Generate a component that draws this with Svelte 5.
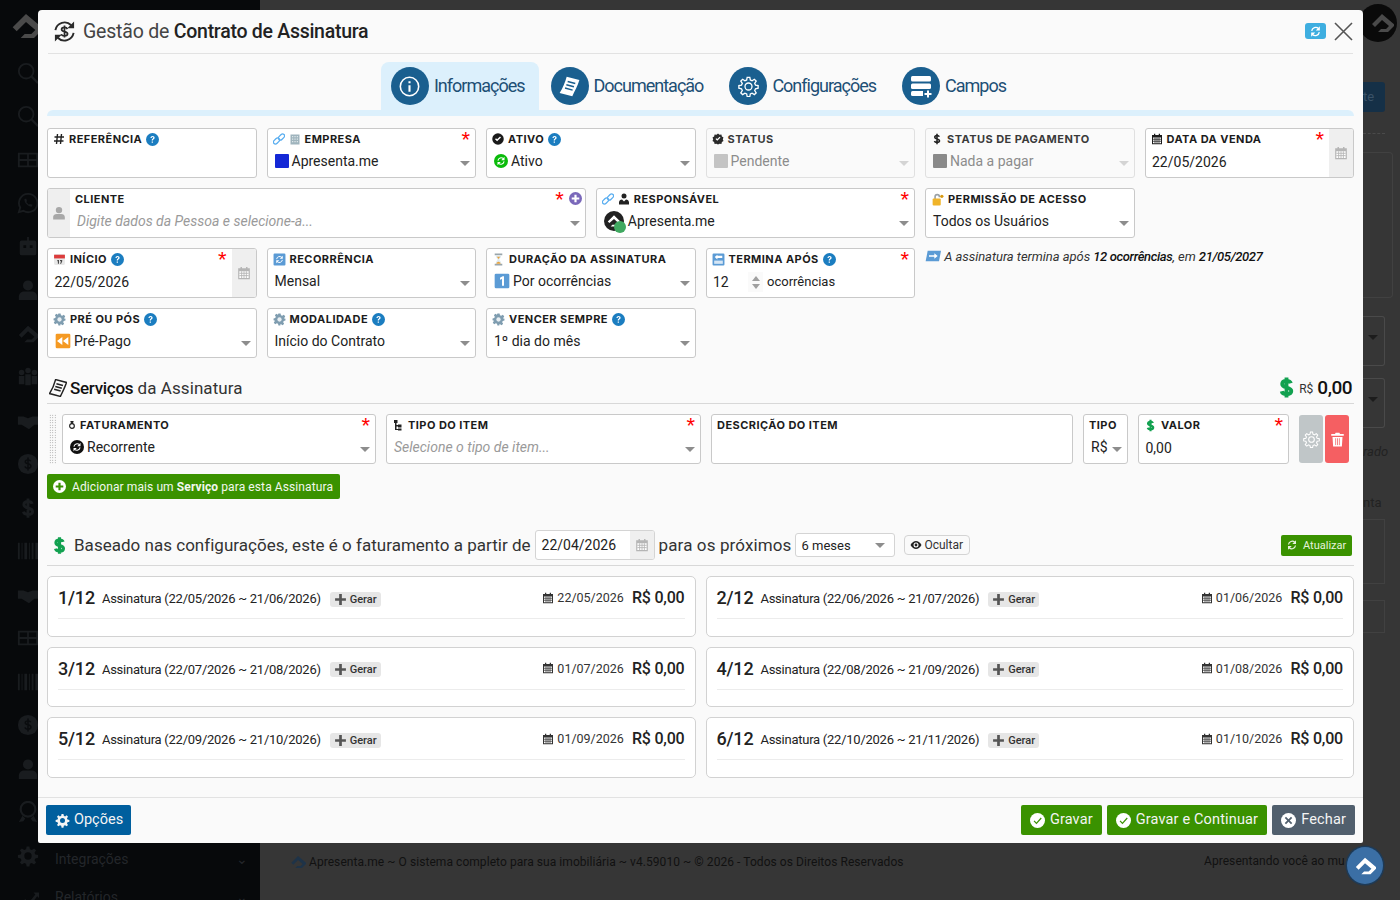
<script>
	// inner markup of the little icons, 24x24 box
	const arrows = (c) =>
		`<path d="M5 11a7.500 7.500 0 0 1 12.500-4.500M19 13a7.500 7.500 0 0 1-12.500 4.500" fill="none" stroke="${c}" stroke-width="2.400"/><path d="M20 2.500V10h-7.500zM4 21.500V14h7.500z" fill="${c}"/>`;

	const icons = {
		help: '<circle cx="12" cy="12" r="12" fill="#1b7dc0"/><path d="M8.300 9.200c.2-2.300 1.800-3.600 3.900-3.600s3.700 1.300 3.700 3.200c0 2.900-3.200 2.700-3.200 5.200h-2.200c0-3.700 3-3.400 3-5.100 0-.8-.7-1.400-1.400-1.400-.9 0-1.500.6-1.600 1.700zM10.500 15.700h2.300V18h-2.300z" fill="#fff"/>',
		hash: '<path d="M9 2 7 22M17 2l-2 20M3 8h19M2 16h19" stroke="#222" stroke-width="2.800" fill="none"/>',
		link: '<g fill="none" stroke="#5aaef0" stroke-width="2.600"><rect x="0" y="12" width="14" height="8" rx="4" transform="rotate(-45 7 16)"/><rect x="10" y="4" width="14" height="8" rx="4" transform="rotate(-45 17 8)"/></g>',
		office: '<path d="M3 3h18v20H3z" fill="#9fb4bd"/><path d="M6 6h2.500v2.500H6zM10.800 6h2.500v2.500h-2.500zM15.500 6H18v2.500h-2.500zM6 11h2.500v2.500H6zM10.800 11h2.500v2.500h-2.500zM15.500 11H18v2.500h-2.500zM6 16h2.500v2.500H6zM10.800 16h2.500v2.500h-2.500zM15.500 16H18v2.500h-2.500z" fill="#dfe7ea"/>',
		check: '<circle cx="12" cy="12" r="11.500" fill="#1a1a1a"/><path d="m6 12.500 4.200 4.200L18 9l-2-2-5.800 5.700L8 10.500z" fill="#fff"/>',
		badge: '<path d="m12 1 3 2.400 3.800-.3 1 3.700 3.200 2.100-1.400 3.600 1.400 3.500-3.200 2.100-1 3.700-3.800-.3L12 23l-3-1.500-3.800.3-1-3.700L1 16l1.400-3.500L1 8.900l3.200-2.100 1-3.700 3.800.3z" fill="#2a2a2a"/><path d="m7 12 3.500 3.500L17 9l-1.700-1.700-4.800 4.800-1.800-1.800z" fill="#fff"/>',
		dollar: '<path d="M16.500 7.500C16 5.700 14.200 5 12 5c-2.500 0-4.500 1.200-4.500 3.400 0 4.800 9.500 2.400 9.500 7.300 0 2.200-2.200 3.300-5 3.300-2.500 0-4.500-1-5-3M12 1.500v21" stroke="#222" stroke-width="3.200" fill="none"/>',
		cal: '<path d="M6 1.500h2.500V4h7V1.500H18V4h4v18.500H2V4h4z" fill="currentColor"/><path d="M4 9h16v11.500H4z" fill="#fff"/><path d="M4 12.500h16M4 16.500h16M8 9v12M12 9v12M16 9v12" stroke="currentColor" stroke-width="1.500"/>',
		person: '<circle cx="12" cy="7" r="5.500" fill="currentColor"/><path d="M2 23v-4c0-3.500 3-5.500 6-5.500h8c3 0 6 2 6 5.500v4z" fill="currentColor"/>',
		boss: '<circle cx="12" cy="6" r="5" fill="#222"/><path d="M2 23v-4c0-4 3-6 6-6l4 4 4-4c3 0 6 2 6 6v4z" fill="#222"/>',
		plus: '<circle cx="12" cy="12" r="12" fill="#7a68ba"/><path d="M10 5h4v5h5v4h-5v5h-4v-5H5v-4h5z" fill="#fff"/>',
		lock: '<path d="M6 11V7a5.500 5.500 0 0 1 11 0v1h-3V7a2.500 2.500 0 0 0-5 0v4z" fill="#9aa1a6"/><rect x="3" y="10" width="15" height="13" rx="2" fill="#f0b429"/><circle cx="20" cy="6" r="3" fill="#d99a12"/>',
		date: '<rect x="2" y="2" width="20" height="20" rx="2" fill="#e8e8e8"/><path d="M2 3h20v7H2z" fill="#dc3c3c"/><path d="M8 13h3v7H9v-5H8zM13 13h4v2l-2 5h-2l2-5h-2z" fill="#444"/>',
		sync: '<rect x="1" y="1" width="22" height="22" rx="2" fill="#5b9bd5"/><g transform="translate(3 3) scale(.75)">' + arrows('#fff') + '</g>',
		hourglass: '<path d="M5 1h14v3H5zM5 20h14v3H5z" fill="#9aa5ab"/><path d="M7 4h10c0 5-3 6-3.500 8 .5 2 3.500 3 3.500 8H7c0-5 3-6 3.500-8C10 10 7 9 7 4" fill="#dfeaf0"/><path d="M9 7h6l-3 4zM8 20c0-2 2-4 4-4s4 2 4 4z" fill="#e8a33d"/>',
		end: '<rect x="1" y="1" width="22" height="22" rx="2" fill="#5b9bd5"/><path d="M19 5v4H10v3L5 7.500 10 3v2z" fill="#fff"/><path d="M4 14h16v6H4z" fill="#fff" opacity=".75"/>',
		gear: '<path d="M10 1h4l.7 3.200 2.300 1 2.800-1.800 2.800 2.800-1.800 2.800 1 2.300L23 10v4l-3.200.7-1 2.300 1.800 2.800-2.800 2.800-2.800-1.800-2.300 1L14 23h-4l-.7-3.200-2.300-1-2.800 1.800-2.800-2.800 1.800-2.800-1-2.300L1 14v-4l3.200-.7 1-2.300-1.800-2.800 2.800-2.800L9 3.200z" fill="#7f9db0"/><circle cx="12" cy="12" r="4" fill="#e8eef2"/>',
		one: '<rect x="1" y="1" width="22" height="22" rx="2" fill="#5b9bd5"/><path d="M9 7l4-2h2v14h-3V9l-3 1z" fill="#fff"/>',
		rewind: '<rect x="1" y="1" width="22" height="22" rx="2" fill="#f59a23"/><path d="M11 6v12l-8-6zM20 6v12l-8-6z" fill="#fff"/>',
		arrow: '<path d="M4 4h20l-3 16H1z" fill="#5b9bd5"/><path d="M6 11h8V8l5 4-5 4v-3H6z" fill="#fff"/>',
		active: '<circle cx="12" cy="12" r="12" fill="#0abb0a"/><g transform="translate(3 3) scale(.75)">' + arrows('#fff') + '</g>',
		recur: '<circle cx="12" cy="12" r="12" fill="#111"/><g transform="translate(3 3) scale(.75)">' + arrows('#fff') + '</g>',
		logo: '<circle cx="12" cy="12" r="12" fill="#222"/><path d="M12 5 4.500 12.500l2 2L12 9.500l5 4.500-2.500 2.500H10l-2 2h7.500l5-5z" fill="#fff"/>',
		moneybag: '<path d="M9 1h6l-1.500 5h-3zM12 8c5 0 7 3 7 7s-3 7-7 7-7-3-7-7 2-7 7-7" fill="none" stroke="#222" stroke-width="3.600"/>',
		tree: '<path d="M4 2h7v6H9v4h3v-1h7v6h-7v-2H9v5h3v-1h7v4h-7v-1H6V8H4z" fill="#222"/>',
		trash: '<path d="M9 1h6l1 2h6v3H2V3h6zM4 8h16l-1 15H5z" fill="#fff"/><path d="M9 10v11M12 10v11M15 10v11" stroke="#f25f5f" stroke-width="1.200"/>',
		cog: '<path d="M10.500 1.500h3l.6 3 2 .9 2.600-1.700 2.100 2.100-1.700 2.600.9 2 3 .6v3l-3 .6-.9 2 1.700 2.600-2.100 2.100-2.600-1.700-2 .9-.6 3h-3l-.6-3-2-.9-2.600 1.700-2.100-2.100 1.700-2.600-.9-2-3-.6v-3l3-.6.9-2-1.700-2.600 2.100-2.100 2.600 1.700 2-.9zM12 8a4 4 0 1 0 0 8 4 4 0 0 0 0-8" fill="currentColor" fill-rule="evenodd"/>',
		cogline: '<path d="M10.500 1.500h3l.6 3 2 .9 2.600-1.700 2.100 2.100-1.700 2.600.9 2 3 .6v3l-3 .6-.9 2 1.700 2.600-2.100 2.100-2.600-1.700-2 .9-.6 3h-3l-.6-3-2-.9-2.600 1.700-2.100-2.100 1.700-2.600-.9-2-3-.6v-3l3-.6.9-2-1.700-2.600 2.100-2.100 2.600 1.700 2-.9z" fill="none" stroke="currentColor" stroke-width="1.500"/><circle cx="12" cy="12" r="4" fill="none" stroke="currentColor" stroke-width="1.500"/>',
		receipt: '<g transform="rotate(15 12 12)"><path d="M6 2h15c0 6-2 14-3 20H3C5 16 6 8 6 2z" fill="none" stroke="currentColor" stroke-width="2"/><path d="M8.500 7h9M8 11h9M7.500 15h9" stroke="currentColor" stroke-width="2"/></g>',
		doc: '<g transform="rotate(15 12 12)"><path d="M6 2h15c0 6-2 14-3 20H3C5 16 6 8 6 2z" fill="currentColor"/><path d="M8.500 7h9M8 11h9M7.500 15h9" stroke="#1a5f8f" stroke-width="1.600"/></g>',
		info: '<circle cx="12" cy="12" r="10.500" fill="none" stroke="currentColor" stroke-width="1.800"/><path d="M10.800 10.500h2.400V18h-2.400zM10.800 6h2.400v2.400h-2.400z" fill="currentColor"/>',
		rows: '<rect x="2" y="2" width="20" height="5.500" rx="1.500" fill="currentColor"/><rect x="2" y="9.500" width="20" height="5.500" rx="1.500" fill="currentColor"/><path d="M3.500 17h10.500v5H3.500A1.500 1.500 0 0 1 2 20.500v-2A1.500 1.500 0 0 1 3.500 17z" fill="currentColor"/><path d="M18 16.500h2v2.500h2.500v2H20v2.500h-2V21h-2.500v-2H18z" fill="currentColor"/>',
		spark: arrows('currentColor'),
		addc: '<circle cx="12" cy="12" r="12" fill="#fff"/><path d="M10 5h4v5h5v4h-5v5h-4v-5H5v-4h5z" fill="#3a9200"/>',
		okc: '<circle cx="12" cy="12" r="12" fill="#fff"/><path d="m6.500 12.500 3.800 4L18 8" fill="none" stroke="#3a9200" stroke-width="2"/>',
		xc: '<circle cx="12" cy="12" r="12" fill="#fff"/><path d="m8 6 4 4 4-4 2 2-4 4 4 4-2 2-4-4-4 4-2-2 4-4-4-4z" fill="#515f6d"/>',
		eye: '<path d="M1 12c3-5 7-8 11-8s8 3 11 8c-3 5-7 8-11 8s-8-3-11-8z" fill="#222"/><circle cx="12" cy="12" r="5" fill="#fff"/><circle cx="12" cy="12" r="2.800" fill="#222"/>',
		cross: '<path d="M9.500 2h5v7.500H22v5h-7.500V22h-5v-7.500H2v-5h7.500z" fill="currentColor"/>',
		home: '<path d="M12 3 2 13l3 3 7-7 7 6-3 3h-5l-3 3h10l7-7z" fill="currentColor"/>',
		money: '<path d="M16.500 7.500C16 5.700 14.200 5 12 5c-2.500 0-4.500 1.200-4.500 3.400 0 4.800 9.500 2.400 9.500 7.300 0 2.200-2.200 3.300-5 3.300-2.500 0-4.500-1-5-3M12 1.500v21" stroke="#12a150" stroke-width="4" fill="none"/>',
		search: '<circle cx="10" cy="10" r="8" fill="none" stroke="currentColor" stroke-width="2"/><path d="m16 16 7 7" stroke="currentColor" stroke-width="2.500"/>',
		table: '<path d="M1 4h22v16H1zM3 6v5h8V6zM13 6v5h8V6zM3 13v5h8v-5zM13 13v5h8v-5z" fill="currentColor" fill-rule="evenodd"/>',
		chat: '<path d="M12 2a10 10 0 0 0-8.500 15L2 22l5-1.500A10 10 0 1 0 12 2z" fill="none" stroke="currentColor" stroke-width="2"/><path d="M8 8c0 4 4 8 8 8l1-2-3-1-1 1-3-3 1-1-1-3z" fill="currentColor"/>',
		bot: '<path d="M11 1h2v4h6a2 2 0 0 1 2 2v12a2 2 0 0 1-2 2H5a2 2 0 0 1-2-2V7a2 2 0 0 1 2-2h6zM7 10v3h3v-3zM14 10v3h3v-3z" fill="currentColor" fill-rule="evenodd"/>',
		team: '<circle cx="5" cy="7" r="3" fill="currentColor"/><circle cx="12" cy="5" r="3" fill="currentColor"/><circle cx="19" cy="7" r="3" fill="currentColor"/><path d="M2 11h6v9H2zM9 9h6v12H9zM16 11h6v9h-6z" fill="currentColor"/>',
		deal: '<path d="M1 7h6l5 2 5-2h6v9h-4l-6 5-3-2-5-3H1z" fill="currentColor"/>',
		coin: '<circle cx="12" cy="12" r="11" fill="currentColor"/><path d="M15 9c-.5-1-1.500-1.500-3-1.500-1.700 0-3 .7-3 2 0 3 6.200 1.500 6.200 4.700 0 1.500-1.500 2.300-3.200 2.300-1.500 0-3-.7-3.300-2M12 5v14" stroke="#0a0c0e" stroke-width="1.600" fill="none"/>',
		bucks: '<path d="M16.500 7.500C16 5.700 14.200 5 12 5c-2.500 0-4.500 1.200-4.500 3.400 0 4.800 9.500 2.400 9.500 7.300 0 2.200-2.200 3.300-5 3.300-2.500 0-4.500-1-5-3M12 1.500v21" stroke="currentColor" stroke-width="3.200" fill="none"/>',
		bars: '<path d="M1 3h2v18H1zM5 3h1v18H5zM8 3h3v18H8zM13 3h1v18h-1zM16 3h2v18h-2zM20 3h3v18h-3z" fill="currentColor"/>',
		medal: '<circle cx="12" cy="9" r="8" fill="none" stroke="currentColor" stroke-width="2.400"/><path d="M6 16 2 23l5-1 2-3zM18 16l4 7-5-1-2-3z" fill="currentColor"/>',
		chart: '<path d="M1 21 9 12l4 4 7-9-2-2h6v6l-2-2-9 12-4-4-6 6z" fill="currentColor"/>'
	};

	const sideIcons = ['search', 'search', 'table', 'chat', 'bot', 'person', 'home', 'team', 'deal', 'coin', 'bucks', 'bars', 'deal', 'table', 'bars', 'coin', 'person', 'medal', 'cog', 'chart'];

	// the label icons that are emoji in the original run a bit wider
	const leadSize = { date: 13, sync: 13, hourglass: 13, end: 13, gear: 13, lock: 13, moneybag: 8, tree: 12 };

	const grid = [
		{ span: 2, lead: ['hash'], label: 'Referência', help: true },
		{ span: 2, lead: ['link', 'office'], label: 'Empresa', req: true, swatch: '#1428d6', value: 'Apresenta.me', caret: true },
		{ span: 2, lead: ['check'], label: 'Ativo', help: true, valueIcon: 'active', value: 'Ativo', caret: true },
		{ span: 2, lead: ['badge'], label: 'Status', off: true, swatch: '#c4c4c4', value: 'Pendente', caret: true },
		{ span: 2, lead: ['dollar'], label: 'Status de Pagamento', off: true, swatch: '#8a8a8a', value: 'Nada a pagar', caret: true },
		{ span: 2, lead: ['cal'], label: 'Data da Venda', req: true, value: '22/05/2026', side: 'cal' },
		{ span: 5, label: 'Cliente', req: true, add: true, hint: 'Digite dados da Pessoa e selecione-a...', caret: true, before: 'person' },
		{ span: 3, lead: ['link', 'boss'], label: 'Responsável', req: true, avatar: true, value: 'Apresenta.me', caret: true },
		{ span: 2, lead: ['lock'], label: 'Permissão de Acesso', value: 'Todos os Usuários', caret: true },
		{ span: 2, empty: true },
		{ span: 2, lead: ['date'], label: 'Início', help: true, req: true, value: '22/05/2026', side: 'cal' },
		{ span: 2, lead: ['sync'], label: 'Recorrência', value: 'Mensal', caret: true },
		{ span: 2, lead: ['hourglass'], label: 'Duração da Assinatura', valueIcon: 'one', value: 'Por ocorrências', caret: true },
		{ span: 2, lead: ['end'], label: 'Termina após', help: true, req: true, spinner: true },
		{ span: 4, note: true },
		{ span: 2, lead: ['gear'], label: 'Pré ou Pós', help: true, valueIcon: 'rewind', value: 'Pré-Pago', caret: true },
		{ span: 2, lead: ['gear'], label: 'Modalidade', help: true, value: 'Início do Contrato', caret: true },
		{ span: 2, lead: ['gear'], label: 'Vencer Sempre', help: true, value: '1º dia do mês', caret: true }
	];

	const tabs = [
		{ name: 'Informações', icon: 'info', active: true },
		{ name: 'Documentação', icon: 'doc' },
		{ name: 'Configurações', icon: 'cogline' },
		{ name: 'Campos', icon: 'rows' }
	];

	const parcels = [
		{ n: '1/12', from: '22/05/2026', to: '21/06/2026', due: '22/05/2026' },
		{ n: '2/12', from: '22/06/2026', to: '21/07/2026', due: '01/06/2026' },
		{ n: '3/12', from: '22/07/2026', to: '21/08/2026', due: '01/07/2026' },
		{ n: '4/12', from: '22/08/2026', to: '21/09/2026', due: '01/08/2026' },
		{ n: '5/12', from: '22/09/2026', to: '21/10/2026', due: '01/09/2026' },
		{ n: '6/12', from: '22/10/2026', to: '21/11/2026', due: '01/10/2026' }
	];
</script>

{#snippet ic(name, size = 12, cls = '')}
	<svg class="ic {cls}" width={size} height={size} viewBox="0 0 24 24" aria-hidden="true">{@html icons[name]}</svg>
{/snippet}

{#snippet labelRow(label, lead = [], help = false)}
	<div class="label">
		{#each lead as l}
			{@render ic(l, leadSize[l] ?? 12)}
		{/each}
		<span>{label}</span>
		{#if help}{@render ic('help', 13)}{/if}
	</div>
{/snippet}

<div class="page">
	<aside class="sidebar">
		<div class="side-logo">{@render ic('home', 32)}</div>
		<div class="side-icons">
			{#each sideIcons as s}
				<span class="side-ic">{@render ic(s, 22)}</span>
			{/each}
		</div>
		<div class="side-foot">
			<span class="side-link">Integrações<i>⌄</i></span>
			<span class="side-link">Relatórios<i>⌄</i></span>
		</div>
	</aside>
	<main class="back">
		<div class="back-foot">
			<span class="back-left">{@render ic('home', 16)} Apresenta.me ~ O sistema completo para sua imobiliária ~ v4.59010 ~ © 2026 - Todos os Direitos Reservados</span>
			<span class="back-right">Apresentando você ao mu</span>
		</div>
	</main>

	<div class="strip">
		<span class="s-btn">te</span>
		<span class="s-dash"></span>
		<span class="s-panel"></span>
		<span class="s-sel"><i></i></span>
		<span class="s-sel"><i></i></span>
		<span class="s-text"><em>rado</em></span>
		<span class="s-text">nta</span>
		<span class="s-box"></span>
		<span class="s-box short"></span>
	</div>
	<div class="top-avatar">{@render ic('home', 24)}</div>
	<div class="float-btn">{@render ic('home', 22)}</div>

	<section class="modal">
		<header class="head">
			<svg class="ic" width="23" height="23" viewBox="0 0 24 24" aria-hidden="true">
				<path d="M2.500 10.500A9.700 9.700 0 0 1 19 5.500M21.500 13.500A9.700 9.700 0 0 1 5 18.500" fill="none" stroke="#2a2a2a" stroke-width="2"/>
				<path d="M22 1.500v7h-7zM2 22.500v-7h7z" fill="#2a2a2a"/>
				<path d="M15 9.500c-.4-1.200-1.500-1.700-3-1.700-1.700 0-3 .7-3 2 0 3 6.200 1.500 6.200 4.600 0 1.400-1.500 2.200-3.200 2.200s-3-.7-3.300-1.900M12 5.800v12.400" fill="none" stroke="#2a2a2a" stroke-width="1.800"/>
			</svg>
			<h1>Gestão de <b>Contrato de Assinatura</b></h1>
			<span class="spacer"></span>
			<span class="reload">{@render ic('spark', 13)}</span>
			<svg class="close" width="19" height="19" viewBox="0 0 19 19" aria-hidden="true"><path d="m1 1 17 17M18 1 1 18" stroke="#555" stroke-width="1.600"/></svg>
		</header>

		<nav class="tabs">
			{#each tabs as t}
				<div class="tab" class:active={t.active}>
					<span class="tab-ic">{@render ic(t.icon, t.icon === 'rows' ? 24 : 21)}</span>
					<span class="tab-name">{t.name}</span>
				</div>
			{/each}
		</nav>
		<div class="band"></div>

		<div class="form">
			{#each grid as f}
				{#if f.empty}
					<span style="grid-column: span {f.span}"></span>
				{:else if f.note}
					<p class="note" style="grid-column: span {f.span}">{@render ic('arrow', 16)} A assinatura termina após <b>12 ocorrências</b>, em <b>21/05/2027</b></p>
				{:else}
					<div class="field" class:off={f.off} style="grid-column: span {f.span}">
						{#if f.before}<span class="before">{@render ic(f.before, 14)}</span>{/if}
						<div class="field-main">
							{@render labelRow(f.label, f.lead ?? [], f.help)}
							<div class="value" class:lower={f.side || f.spinner}>
								{#if f.swatch}<span class="swatch" style="background: {f.swatch}"></span>{/if}
								{#if f.valueIcon}{@render ic(f.valueIcon, f.valueIcon === 'active' ? 14 : 16)}{/if}
								{#if f.avatar}
									<span class="avatar">{@render ic('logo', 20)}<i></i></span>
								{/if}
								{#if f.hint}<em class="hint">{f.hint}</em>{/if}
								{#if f.value}<span>{f.value}</span>{/if}
								{#if f.spinner}
									<span class="num">12</span>
									<span class="spin"><i class="up"></i><i class="down"></i></span>
									<span class="unit">ocorrências</span>
								{/if}
							</div>
							{#if f.req}<span class="req" class:shifted={f.add}>*</span>{/if}
							{#if f.add}<span class="add">{@render ic('plus', 13)}</span>{/if}
							{#if f.caret}<span class="caret"></span>{/if}
						</div>
						{#if f.side}<span class="side">{@render ic('cal', 14)}</span>{/if}
					</div>
				{/if}
			{/each}
		</div>

		<div class="section-head">
			{@render ic('receipt', 18)}
			<h2><b>Serviços</b> da Assinatura</h2>
			<span class="spacer"></span>
			{@render ic('money', 23, 'sum-ic')}
			<small>R$</small>
			<strong>0,00</strong>
		</div>

		<div class="service">
			<span class="grip"></span>
			<div class="field w-fat">
				<div class="field-main">
					{@render labelRow('Faturamento', ['moneybag'])}
					<div class="value">{@render ic('recur', 14)}<span>Recorrente</span></div>
					<span class="req">*</span><span class="caret"></span>
				</div>
			</div>
			<div class="field w-type">
				<div class="field-main">
					{@render labelRow('Tipo do Item', ['tree'])}
					<div class="value"><em class="hint">Selecione o tipo de item...</em></div>
					<span class="req">*</span><span class="caret"></span>
				</div>
			</div>
			<div class="field w-desc">
				<div class="field-main">{@render labelRow('Descrição do Item')}</div>
			</div>
			<div class="field w-kind">
				<div class="field-main">
					{@render labelRow('Tipo')}
					<div class="value"><span>R$</span></div>
					<span class="caret"></span>
				</div>
			</div>
			<div class="field w-val">
				<div class="field-main">
					<div class="label">{@render ic('money', 13)}<span>Valor</span></div>
					<div class="value lower"><span>0,00</span></div>
					<span class="req">*</span>
				</div>
			</div>
			<div class="row-btns">
				<span class="b-gear">{@render ic('cogline', 17)}</span>
				<span class="b-del">{@render ic('trash', 15)}</span>
			</div>
		</div>

		<div class="add-line">
			<button class="add-btn">{@render ic('addc', 13)}<span>Adicionar mais um <b>Serviço</b> para esta Assinatura</span></button>
		</div>

		<div class="bill-head">
			{@render ic('money', 19)}
			<span class="bill-text">Baseado nas configurações, este é o faturamento a partir de</span>
			<div class="date-input"><span>22/04/2026</span><i>{@render ic('cal', 14)}</i></div>
			<span class="bill-text wide">para os próximos</span>
			<div class="months"><span>6 meses</span><i></i></div>
			<button class="hide-btn">{@render ic('eye', 12)}<span>Ocultar</span></button>
			<span class="spacer"></span>
			<button class="refresh-btn">{@render ic('spark', 12)}<span>Atualizar</span></button>
		</div>

		<div class="cards">
			{#each parcels as p}
				<article class="card">
					<div class="card-row">
						<span class="c-n">{p.n}</span>
						<span class="c-desc">Assinatura ({p.from} ~ {p.to})</span>
						<span class="c-gen">{@render ic('cross', 13)}Gerar</span>
						<span class="spacer"></span>
						<span class="c-due">{@render ic('cal', 12)}{p.due}</span>
						<span class="c-val">R$ 0,00</span>
					</div>
				</article>
			{/each}
		</div>

		<footer class="foot">
			<button class="btn blue">{@render ic('cog', 15)}Opções</button>
			<span class="spacer"></span>
			<button class="btn green">{@render ic('okc', 15)}Gravar</button>
			<button class="btn green">{@render ic('okc', 15)}Gravar e Continuar</button>
			<button class="btn slate">{@render ic('xc', 15)}Fechar</button>
		</footer>
	</section>
</div>

<style>
	:global(body) {
		margin: 0;
		background: #363636;
		font-family: Roboto, 'Liberation Sans', sans-serif;
	}

	.page {
		position: relative;
		display: flex;
		width: 1400px;
		height: 900px;
		overflow: hidden;
	}

	.spacer { flex: 1; }
	.ic { flex: none; display: block; }

	/* what sits dimmed behind the modal */
	.sidebar {
		position: relative;
		width: 260px;
		flex: none;
		background: #07090b;
		color: #23262a;
		overflow: hidden;
	}
	.side-logo { height: 40px; padding: 10px 0 0 10px; color: #4a4a4a; }
	.side-icons {
		display: flex;
		flex-direction: column;
		padding-left: 17px;
		margin-top: 1px;
	}
	.side-ic {
		height: 43.500px;
		display: flex;
		align-items: center;
		color: #191c1f;
	}
	.side-foot {
		position: absolute;
		left: 55px;
		right: 12px;
		top: 851px;
		display: flex;
		flex-direction: column;
		gap: 20px;
		font-size: 14px;
	}
	.side-link { display: flex; justify-content: space-between; height: 18px; }
	.side-link i { font-style: normal; }

	.back {
		flex: 1;
		background: #363636;
		display: flex;
		flex-direction: column;
		justify-content: flex-end;
	}
	.back-foot {
		display: flex;
		justify-content: space-between;
		padding: 0 0 30px 30px;
		font-size: 12px;
		letter-spacing: 0.06px;
		color: #111;
	}
	.back-left { display: flex; align-items: center; gap: 3px; }
	.back-left :global(.ic) { color: #1e3348; }
	.back-right { width: 196px; white-space: nowrap; overflow: hidden; }

	.strip {
		position: absolute;
		left: 1363px;
		top: 0;
		width: 37px;
		height: 900px;
		display: flex;
		flex-direction: column;
		font-size: 13px;
		color: #222;
	}
	.strip span { box-sizing: border-box; flex: none; }
	.s-btn {
		width: 22px;
		height: 30px;
		margin-top: 82px;
		background: #153047;
		border-radius: 0 3px 3px 0;
		color: #3a5268;
		line-height: 30px;
	}
	.s-dash { width: 22px; height: 1px; margin-top: 21px; border-top: 1px dashed #4a4a4a; }
	.s-panel { width: 30px; height: 146px; margin-top: 18px; border: 1px solid #414141; border-left: 0; border-radius: 0 4px 4px 0; }
	.s-sel { position: relative; width: 22px; height: 50px; margin-top: 18px; border: 1px solid #4a4a4a; border-left: 0; border-radius: 0 3px 3px 0; }
	.s-sel + .s-sel { margin-top: 12px; }
	.s-sel i {
		position: absolute;
		right: 6px;
		top: 18px;
		border-left: 5px solid transparent;
		border-right: 5px solid transparent;
		border-top: 5px solid #1c1c1c;
	}
	.s-text { height: 16px; line-height: 16px; margin-top: 16px; white-space: nowrap; }
	.s-text + .s-text { margin-top: 35px; }
	.s-box { width: 22px; height: 65px; margin-top: 8px; border: 1px solid #414141; border-left: 0; }
	.s-box.short { height: 33px; margin-top: 16px; }

	.top-avatar {
		position: absolute;
		left: 1359px;
		top: 4px;
		width: 38px;
		height: 38px;
		border-radius: 50%;
		background: #0a0a0a;
		color: #4a4a4a;
		display: flex;
		align-items: center;
		justify-content: flex-end;
		padding-right: 3px;
		box-sizing: border-box;
	}
	.float-btn {
		position: absolute;
		left: 1347px;
		top: 847px;
		width: 36px;
		height: 37px;
		border-radius: 50%;
		background: #3b6fa5;
		color: #fff;
		display: flex;
		align-items: center;
		justify-content: center;
		box-shadow: 0 0 0 1.500px #1e3a56;
	}

	.modal {
		position: absolute;
		left: 38px;
		top: 10px;
		width: 1325px;
		height: 833px;
		box-sizing: border-box;
		background: #fafafa;
		border-radius: 4px 4px 2px 2px;
		padding: 0 9px;
		display: flex;
		flex-direction: column;
		color: #222;
	}

	.head {
		height: 44px;
		flex: none;
		box-sizing: border-box;
		display: flex;
		align-items: center;
		gap: 7px;
		margin: 0 1px;
		padding: 0 0 1px 5px;
		border-bottom: 1px solid #e2e2e2;
	}
	h1 {
		margin: 0;
		font-size: 19.500px;
		font-weight: 400;
		color: #444;
		letter-spacing: -0.2px;
	}
	h1 b { font-weight: 500; color: #222; letter-spacing: -0.27px; }
	.reload {
		width: 21px;
		height: 16px;
		background: #3eaee0;
		border-radius: 3px;
		color: #fff;
		display: flex;
		align-items: center;
		justify-content: center;
	}
	.close { margin: 0 0 0 1px; }

	.tabs {
		display: flex;
		justify-content: center;
		gap: 2px;
		height: 48px;
		margin-top: 8px;
		flex: none;
	}
	.tab {
		display: flex;
		align-items: center;
		gap: 5px;
		padding: 0 14px 0 10px;
		height: 48px;
		box-sizing: border-box;
		border-radius: 8px 8px 0 0;
		color: #1d4f75;
	}
	.tab.active { background: #dcf0fc; }
	.tab-ic {
		width: 38px;
		height: 38px;
		border-radius: 50%;
		background: #1a5f8f;
		color: #fff;
		display: flex;
		align-items: center;
		justify-content: center;
	}
	.tab-name { font-size: 18px; letter-spacing: -1px; margin-bottom: 2px; }
	.band {
		height: 6px;
		flex: none;
		background: #dcf0fc;
		border-radius: 6px 6px 0 0;
	}

	.form {
		display: grid;
		grid-template-columns: repeat(12, minmax(0, 1fr));
		grid-auto-rows: 50px;
		gap: 10px;
		margin-top: 12px;
		flex: none;
	}

	.field {
		box-sizing: border-box;
		display: flex;
		background: #fff;
		border: 1px solid #c9c9c9;
		border-radius: 3px;
		min-width: 0;
		height: 50px;
		overflow: hidden;
	}
	.field.off { background: #fafafa; border-color: #e0e0e0; }
	.field-main { position: relative; flex: 1; min-width: 0; }
	.before, .side {
		flex: none;
		background: #efefef;
		color: #b5b5b5;
		display: flex;
		align-items: center;
		justify-content: center;
	}
	.before { width: 22px; color: #a8a8a8; }
	.before + .field-main .value { padding-left: 7px; }
	.side { width: 24px; }

	.label {
		display: flex;
		align-items: center;
		gap: 4px;
		height: 12px;
		padding: 4px 0 0 5px;
		font-family: Inter, 'Open Sans', sans-serif;
		font-size: 11px;
		font-weight: 700;
		line-height: 12px;
		text-transform: uppercase;
		letter-spacing: 0.45px;
		color: #1c1c1c;
		white-space: nowrap;
	}
	.off .label { color: #3a3a3a; }

	.value {
		display: flex;
		align-items: center;
		gap: 3px;
		height: 20px;
		margin-top: 6px;
		padding-left: 7px;
		font-size: 14px;
		line-height: 20px;
		color: #222;
		white-space: nowrap;
	}
	.value.lower { margin-top: 7px; padding-left: 6.500px; }
	.off .value { color: #8c8c8c; }
	.swatch { width: 14px; height: 14px; border-radius: 1px; }
	.hint { color: #9a9a9a; font-style: italic; font-size: 14px; }
	.avatar { position: relative; width: 21px; height: 20px; }
	.avatar i {
		position: absolute;
		right: -1px;
		bottom: -2px;
		width: 12px;
		height: 12px;
		border-radius: 50%;
		background: #3fa860;
	}

	.req {
		position: absolute;
		right: 5px;
		top: 1px;
		color: #f00;
		font-family: 'Liberation Sans', sans-serif;
		font-size: 22px;
		line-height: 20px;
	}
	.req.shifted { right: 21px; }
	.add { position: absolute; right: 3px; top: 3px; }
	.caret {
		position: absolute;
		right: 5px;
		bottom: 11px;
		width: 0;
		height: 0;
		border-left: 5px solid transparent;
		border-right: 5px solid transparent;
		border-top: 5px solid #8d8d8d;
	}
	.off .caret { border-top-color: #d4d4d4; }

	.num { width: 32px; }
	.spin {
		width: 15px;
		height: 20px;
		background: #fafafa;
		display: flex;
		flex-direction: column;
		justify-content: center;
		align-items: center;
		gap: 3px;
	}
	.spin i { width: 0; height: 0; border-left: 4px solid transparent; border-right: 4px solid transparent; }
	.spin .up { border-bottom: 5px solid #a0a0a0; }
	.spin .down { border-top: 5px solid #a0a0a0; }
	.unit { font-size: 13px; margin-left: 1px; }

	.note {
		margin: 0;
		display: block;
		font-size: 13px;
		font-style: italic;
		color: #333;
		letter-spacing: -0.05px;
		white-space: nowrap;
	}
	.note :global(.ic) { display: inline-block; vertical-align: -3px; }
	.note b { color: #111; font-weight: 500; letter-spacing: -0.35px; }

	.section-head {
		display: flex;
		align-items: center;
		gap: 3px;
		height: 36px;
		margin-top: 10px;
		padding: 4px 2px 0;
		box-sizing: border-box;
		border-bottom: 1px solid #d8d8d8;
		flex: none;
		color: #222;
	}
	h2 { margin: 0; font-size: 17px; font-weight: 400; color: #333; letter-spacing: 0.08px; }
	h2 b { font-weight: 500; color: #111; letter-spacing: -0.3px; }
	.section-head small { font-size: 12px; margin: 2px 1px 0 0; color: #333; }
	.section-head strong { font-size: 19px; font-weight: 500; letter-spacing: -0.5px; color: #111; }
	.section-head :global(.sum-ic) { margin-right: -2px; }

	.service {
		display: flex;
		gap: 10px;
		margin-top: 10px;
		flex: none;
	}
	.grip {
		width: 8px;
		margin: 0 -5px 0 2px;
		height: 50px;
		background-image: radial-gradient(#8e8e8e 0.7px, transparent 0.8px);
		background-size: 2.500px 2.500px;
	}
	.w-fat { width: 314px; flex: none; }
	.w-type { width: 315px; flex: none; }
	.w-desc { width: 362px; flex: none; }
	.w-kind { width: 45px; flex: none; }
	.w-val { width: 151px; flex: none; }

	.row-btns { display: flex; gap: 2px; padding-top: 1px; }
	.row-btns span {
		width: 24px;
		height: 48px;
		border-radius: 3px;
		display: flex;
		align-items: center;
		justify-content: center;
		color: #fff;
	}
	.b-gear { background: #c0c6c8; }
	.b-del { background: #f55f62; }

	.add-line { margin-top: 10px; flex: none; }
	button {
		font-family: inherit;
		border: 0;
		cursor: pointer;
		display: inline-flex;
		align-items: center;
	}
	.add-btn {
		display: flex;
		height: 25px;
		width: 293px;
		padding: 0 0 0 6px;
		gap: 6px;
		background: #3a9200;
		color: #f2f8ee;
		font-size: 12px;
		letter-spacing: 0.1px;
		border-radius: 2px;
	}
	.add-btn b { font-weight: 700; }

	.bill-head {
		display: flex;
		align-items: center;
		gap: 4px;
		height: 30px;
		margin-top: 31px;
		padding: 0 2px 5px 3px;
		border-bottom: 1px solid #d8d8d8;
		flex: none;
	}
	.bill-text { font-size: 17px; color: #333; letter-spacing: 0.02px; white-space: nowrap; }
	.bill-text.wide { letter-spacing: 0.12px; }
	.bill-head > :global(.ic:first-child) { margin-right: 1px; }
	.date-input {
		width: 120px;
		height: 30px;
		box-sizing: border-box;
		border: 1px solid #d4d4d4;
		border-radius: 3px;
		background: #fff;
		display: flex;
		align-items: center;
		justify-content: space-between;
		padding-left: 6px;
		font-size: 14px;
		overflow: hidden;
	}
	.date-input i {
		width: 24px;
		height: 100%;
		background: #efefef;
		color: #b5b5b5;
		display: flex;
		align-items: center;
		justify-content: center;
	}
	.months {
		width: 100px;
		height: 24px;
		box-sizing: border-box;
		border: 1px solid #d4d4d4;
		border-radius: 3px;
		background: #fff;
		display: flex;
		align-items: center;
		justify-content: space-between;
		padding: 0 9px 0 5px;
		font-size: 13px;
	}
	.months i {
		width: 0;
		height: 0;
		border-left: 5px solid transparent;
		border-right: 5px solid transparent;
		border-top: 5px solid #8d8d8d;
	}
	.hide-btn {
		height: 20px;
		width: 66px;
		margin-left: 5px;
		box-sizing: border-box;
		padding: 0 0 0 5px;
		gap: 2px;
		background: #fafafa;
		border: 1px solid #d4d4d4;
		border-radius: 4px;
		color: #333;
		font-size: 12px;
	}
	.refresh-btn {
		height: 21px;
		width: 71px;
		padding: 0 0 0 5px;
		gap: 5px;
		background: #3a9200;
		color: #e6f2dc;
		font-size: 11px;
		border-radius: 2px;
	}

	.cards {
		display: grid;
		grid-template-columns: 1fr 1fr;
		gap: 10px;
		margin-top: 10px;
		flex: none;
	}
	.card {
		box-sizing: border-box;
		height: 60.500px;
		background: #fff;
		border: 1px solid #d2d2d2;
		border-radius: 5px;
		padding: 0 10px;
	}
	.card-row {
		display: flex;
		align-items: center;
		height: 41px;
		border-bottom: 1px solid #ececec;
		white-space: nowrap;
	}
	.c-n { font-size: 18px; font-weight: 500; color: #222; margin-right: 7px; letter-spacing: -0.2px; }
	.c-desc { font-size: 13px; color: #222; letter-spacing: -0.25px; margin-top: 2px; }
	.c-gen {
		display: inline-flex;
		align-items: center;
		gap: 3px;
		height: 15px;
		margin: 3px 0 0 9px;
		padding: 0 4px;
		background: #e6e6e6;
		border-radius: 3px;
		font-size: 11px;
		font-weight: 500;
		color: #333;
	}
	.c-gen :global(.ic) { color: #555; }
	.c-due { display: inline-flex; align-items: center; gap: 3px; font-size: 12.500px; color: #333; }
	.c-val { font-size: 16px; font-weight: 500; color: #222; margin-left: 8px; letter-spacing: -0.2px; }

	.foot {
		display: flex;
		align-items: center;
		gap: 5px;
		height: 46px;
		margin: auto -9px 0;
		padding: 0 8px 1px;
		box-sizing: border-box;
		border-top: 1px solid #e2e2e2;
		flex: none;
	}
	.btn {
		height: 30px;
		gap: 5px;
		padding: 0 9px 2px;
		border-radius: 2px;
		color: #f4f4f4;
		font-size: 14.500px;
		letter-spacing: 0.15px;
	}
	.btn :global(.ic) { margin-top: 2px; }
	.blue { background: #005f9e; gap: 4px; padding-right: 8px; letter-spacing: 0; }
	.green { background: #3a9200; }
	.slate { background: #515f6d; }
</style>
